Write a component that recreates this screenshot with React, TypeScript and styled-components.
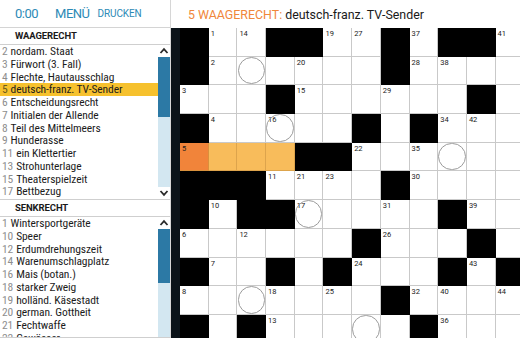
import React from 'react';
import styled, { createGlobalStyle } from 'styled-components';

const FONT = 'Roboto, "Liberation Sans", sans-serif';
const CELL = 28.7;

const GlobalStyle = createGlobalStyle`
  html, body {
    margin: 0;
    padding: 0;
    background: #ffffff;
  }
  body {
    font-family: ${FONT};
  }
`;

const Screen = styled.div`
  display: flex;
  width: 520px;
  height: 338px;
  overflow: hidden;
  background: #ffffff;
`;

/* ---------- left column ---------- */

const Side = styled.aside`
  display: flex;
  flex-direction: column;
  flex: none;
  width: 171px;
  box-sizing: border-box;
  border-right: 1px solid #d6d6d6;
  overflow: hidden;
`;

const TopBar = styled.div`
  flex: none;
  display: flex;
  align-items: center;
  height: 28px;
  box-sizing: border-box;
  padding-left: 15px;
  border-bottom: 1px solid #d4d4d4;
  color: #2c8ab6;
  white-space: nowrap;
`;

const TopButton = styled.span<{ $small?: boolean; $gap?: number }>`
  font-size: ${({ $small }) => ($small ? '10px' : '13px')};
  letter-spacing: ${({ $small }) => ($small ? '-0.1px' : '-0.5px')};
  margin-right: ${({ $gap }) => $gap ?? 0}px;
  line-height: 1;
`;

const SectionTitle = styled.div`
  flex: none;
  height: 16px;
  line-height: 16px;
  padding-left: 15px;
  font-size: 9.5px;
  font-weight: 700;
  letter-spacing: -0.1px;
  color: #1a1a1a;
  border-bottom: 1px solid #cfcfcf;
`;

const ListBox = styled.div<{ $height?: number }>`
  display: flex;
  flex: ${({ $height }) => ($height ? 'none' : '1')};
  height: ${({ $height }) => ($height ? `${$height}px` : 'auto')};
  min-height: 0;
  border-bottom: 1px solid #cfcfcf;
  overflow: hidden;
`;

const Items = styled.ul`
  flex: 1;
  margin: 0;
  padding: 0;
  list-style: none;
  overflow: hidden;
`;

const Item = styled.li<{ $active?: boolean }>`
  height: 12.75px;
  line-height: 12.75px;
  padding-left: 2px;
  font-size: 11.5px;
  font-stretch: 87.5%;
  letter-spacing: -0.1px;
  white-space: nowrap;
  color: #1c1c1c;
  background: ${({ $active }) => ($active ? '#f6c12e' : 'transparent')};
`;

const ItemNo = styled.span<{ $active?: boolean }>`
  color: ${({ $active }) => ($active ? '#6b5a1e' : '#8e8e8e')};
  margin-right: 3px;
`;

const Scroll = styled.div`
  display: flex;
  flex-direction: column;
  width: 12px;
  flex: none;
`;

const Arrow = styled.div`
  display: flex;
  align-items: center;
  justify-content: center;
  height: 12px;
  flex: none;
`;

const Track = styled.div`
  flex: 1;
  display: flex;
  flex-direction: column;
  background: #d3e7f1;
`;

const Thumb = styled.div<{ $h: number }>`
  height: ${({ $h }) => $h}px;
  background: #2c79a5;
`;

const Chevron = ({ up }: { up?: boolean }) => (
  <svg width="10" height="8" viewBox="0 0 10 8">
    <path
      d={up ? 'M1.5 6 L5 2.2 L8.5 6' : 'M1.5 2 L5 5.8 L8.5 2'}
      fill="none"
      stroke="#2a2a2a"
      strokeWidth="1.8"
    />
  </svg>
);

type Clue = [string, string];

const across: Clue[] = [
  ['2', 'nordam. Staat'],
  ['3', 'Fürwort (3. Fall)'],
  ['4', 'Flechte, Hautausschlag'],
  ['5', 'deutsch-franz. TV-Sender'],
  ['6', 'Entscheidungsrecht'],
  ['7', 'Initialen der Allende'],
  ['8', 'Teil des Mittelmeers'],
  ['9', 'Hunderasse'],
  ['11', 'ein Klettertier'],
  ['13', 'Strohunterlage'],
  ['15', 'Theaterspielzeit'],
  ['17', 'Bettbezug'],
];

const down: Clue[] = [
  ['1', 'Wintersportgeräte'],
  ['10', 'Speer'],
  ['12', 'Erdumdrehungszeit'],
  ['14', 'Warenumschlagplatz'],
  ['16', 'Mais (botan.)'],
  ['18', 'starker Zweig'],
  ['19', 'holländ. Käsestadt'],
  ['20', 'german. Gottheit'],
  ['21', 'Fechtwaffe'],
  ['22', 'Gewässer'],
];

const ClueList = ({
  clues,
  height,
  thumb,
  active,
  withDown,
}: {
  clues: Clue[];
  height?: number;
  thumb: number;
  active?: string;
  withDown?: boolean;
}) => (
  <ListBox $height={height}>
    <Items>
      {clues.map(([no, text]) => (
        <Item key={no} $active={no === active}>
          <ItemNo $active={no === active}>{no}</ItemNo>
          {text}
        </Item>
      ))}
    </Items>
    <Scroll>
      <Arrow>
        <Chevron up />
      </Arrow>
      <Track>
        <Thumb $h={thumb} />
      </Track>
      {withDown && (
        <Arrow>
          <Chevron />
        </Arrow>
      )}
    </Scroll>
  </ListBox>
);

/* ---------- right column ---------- */

const Main = styled.main`
  flex: 1;
  display: flex;
  flex-direction: column;
  min-width: 0;
`;

const ClueBar = styled.div`
  height: 28px;
  flex: none;
  display: flex;
  align-items: center;
  padding-left: 17px;
  font-size: 12.4px;
  color: #1a1a1a;
  white-space: nowrap;
`;

const ClueLabel = styled.span`
  color: #f0873a;
  margin-right: 3px;
`;

const Board = styled.div`
  flex: 1;
  background: #0b1319;
  padding-left: 9px;
  overflow: hidden;
`;

const Grid = styled.div`
  display: grid;
  grid-template-columns: repeat(12, ${CELL}px);
  grid-auto-rows: ${CELL}px;
`;

type Kind = 'white' | 'black' | 'current' | 'word';

const cellBg: Record<Kind, string> = {
  white: '#ffffff',
  black: '#000000',
  current: '#f1843a',
  word: '#f8bc5b',
};

const cellLine: Record<Kind, string> = {
  white: '#c9c9c9',
  black: '#000000',
  current: '#d9903c',
  word: '#dda44c',
};

const Cell = styled.div<{ $kind: Kind }>`
  position: relative;
  box-sizing: border-box;
  background: ${({ $kind }) => cellBg[$kind]};
  border-right: 1px solid ${({ $kind }) => cellLine[$kind]};
  border-bottom: 1px solid ${({ $kind }) => cellLine[$kind]};
`;

const CellNo = styled.span`
  display: block;
  padding: 2px 0 0 2px;
  font-size: 7.5px;
  line-height: 8px;
  color: #1a1a1a;
`;

const Ring = styled.div`
  position: absolute;
  left: 0.3px;
  top: 0.3px;
  width: 27.4px;
  height: 27.4px;
  box-sizing: border-box;
  border: 1.5px solid #9b9b9b;
  border-radius: 50%;
`;

// '#' black, '.' white, number = clue number, trailing 'o' = ring
const rows: string[][] = [
  ['#', '1', '14', '#', '#', '19', '27', '#', '37', '#', '#', '41'],
  ['#', '2', 'o', '.', '20', '.', '.', '#', '28', '38', '.', '.'],
  ['3', '.', '.', '#', '15', '.', '.', '29', '.', '.', '#', '.'],
  ['#', '4', '.', '16o', '.', '.', '#', '.', '#', '34', '42', '.'],
  ['5', '.', '.', '.', '#', '#', '22', '.', '35', 'o', '.', '.'],
  ['#', '#', '#', '11', '21', '23', '.', '#', '30', '.', '.', '.'],
  ['#', '10', '#', '#', '17o', '.', '.', '31', '.', '#', '39', '.'],
  ['6', '.', '12', '.', '.', '.', '#', '26', '.', '.', '#', '.'],
  ['#', '7', '.', '#', '.', '#', '24', '.', '.', '#', '43', '#'],
  ['8', '.', 'o', '18', '.', '25', '.', '#', '32', '40', '.', '44'],
  ['#', '.', '#', '13', '.', '.', 'o', '.', '#', '36', '.', '.'],
];

const kindOf = (r: number, c: number, v: string): Kind => {
  if (v === '#') return 'black';
  if (r === 4 && c === 0) return 'current';
  if (r === 4 && c < 4) return 'word';
  return 'white';
};

const Crossword = () => (
  <Grid>
    {rows.map((row, r) =>
      row.map((v, c) => {
        const ring = v.endsWith('o');
        const no = v.replace('o', '');
        const num = /^\d+$/.test(no) ? no : null;
        return (
          <Cell key={`${r}-${c}`} $kind={kindOf(r, c, v)}>
            {num && <CellNo>{num}</CellNo>}
            {ring && <Ring />}
          </Cell>
        );
      }),
    )}
  </Grid>
);

export default function App() {
  return (
    <>
      <GlobalStyle />
      <Screen>
        <Side>
          <TopBar>
            <TopButton $gap={17}>0:00</TopButton>
            <TopButton $gap={8}>MENÜ</TopButton>
            <TopButton $small>DRUCKEN</TopButton>
          </TopBar>
          <SectionTitle>WAAGERECHT</SectionTitle>
          <ClueList clues={across} height={154} thumb={60} active="5" withDown />
          <SectionTitle>SENKRECHT</SectionTitle>
          <ClueList clues={down} thumb={54} />
        </Side>
        <Main>
          <ClueBar>
            <ClueLabel>5 WAAGERECHT:</ClueLabel>
            deutsch-franz. TV-Sender
          </ClueBar>
          <Board>
            <Crossword />
          </Board>
        </Main>
      </Screen>
    </>
  );
}
